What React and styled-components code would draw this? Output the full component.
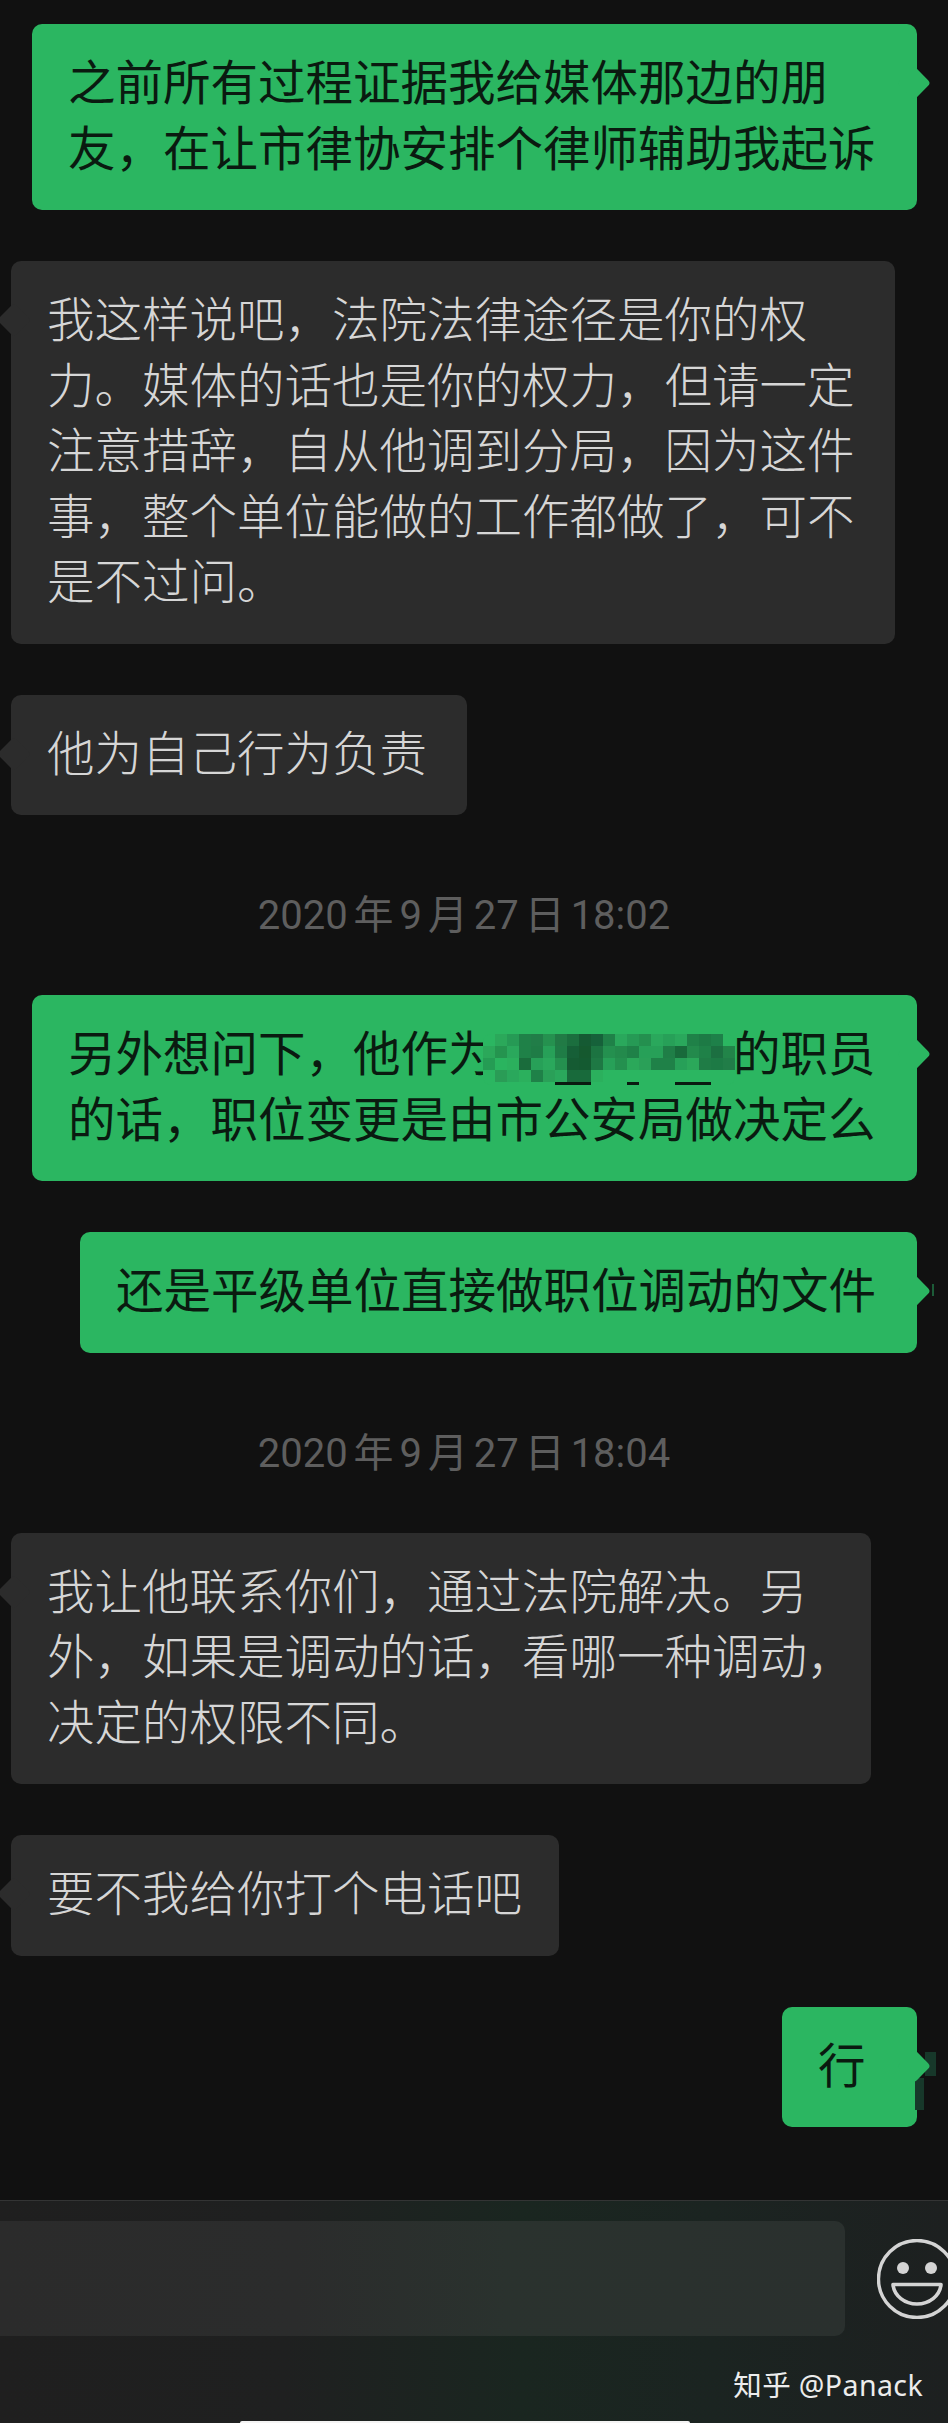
import React from "react";
import styled, { createGlobalStyle } from "styled-components";

const GlobalStyle = createGlobalStyle`
  html, body {
    margin: 0;
    padding: 0;
    background: #111111;
  }

  body {
    font-family: "Noto Sans CJK SC", "Noto Sans", sans-serif;
  }
`;

// 21 x 5 mosaic over the blurred part of the second green message,
// the thin last row is what sticks out of the hidden characters
const MOSAIC = [
  "2bb661 2ba85a 269a55 1f8148 217d48 25914f 217a45 1b6e3e 155a33 16613a 1f8148 2aa85c 269a55 24904f 2aa85c 27a058 2aa85c 1f8148 1d7a45 1e8049 2bb661",
  "2ba85a 25944f 2aa85c 1f8148 1f7c46 27a058 1f7c46 165f37 15592f 1c7341 24904f 238a4c 1f8148 27a058 27a058 1f7e47 186a3b 238a4c 1f8148 1c6f41 228449",
  "259c54 2ab45f 2bb05d 1a6c3c 27a058 2aa85c 24904f 155b33 145a31 1e7844 27a058 24904f 2ba85a 2aa058 1f8148 1f8148 27a058 2ba85a 1f7c46 1d7a45 217d48",
  "2bb661 2a9c56 2aa85c 2bb05d 1f8148 2aa058 2aa85c 186a3b 186a3b 2bb05d 2bb661 2bb661 2bb661 2bb661 2bb661 2bb661 2bb661 2bb661 2bb661 2bb661 2bb661",
  "2bb661 2bb661 2bb661 2bb661 2bb661 2bb661 0a1a10 0a1a10 0a1a10 2bb661 2bb661 2bb661 0a1a10 2bb661 2bb661 2bb661 0a1a10 0a1a10 0a1a10 2bb661 2bb661",
];

const THREADS = [
  { kind: "out", width: 885, lines: ["之前所有过程证据我给媒体那边的朋", "友，在让市律协安排个律师辅助我起诉"] },
  {
    kind: "in",
    width: 884,
    lines: [
      "我这样说吧，法院法律途径是你的权",
      "力。媒体的话也是你的权力，但请一定",
      "注意措辞，自从他调到分局，因为这件",
      "事，整个单位能做的工作都做了，可不",
      "是不过问。",
    ],
  },
  { kind: "in", width: 456, lines: ["他为自己行为负责"] },
  { kind: "time", text: "2020 年 9 月 27 日 18:02" },
  { kind: "redacted", width: 885 },
  { kind: "out", width: 837, lines: ["还是平级单位直接做职位调动的文件"], mark: "thin" },
  { kind: "time", text: "2020 年 9 月 27 日 18:04" },
  {
    kind: "in",
    width: 860,
    lines: ["我让他联系你们，通过法院解决。另", "外，如果是调动的话，看哪一种调动，", "决定的权限不同。"],
  },
  { kind: "in", width: 548, lines: ["要不我给你打个电话吧"] },
  { kind: "out", width: 135, lines: ["行"], mark: "smudge" },
];

const Mosaic = () => (
  <MosaicGrid aria-hidden="true">
    {MOSAIC.flatMap((row, r) =>
      row.split(" ").map((hex, c) => (
        <span key={`${r}-${c}`} style={{ background: `#${hex}` }} />
      ))
    )}
  </MosaicGrid>
);

const Message = ({ item }) => {
  const out = item.kind !== "in";
  return (
    <Bubble $out={out} $width={item.width}>
      {item.kind === "redacted" ? (
        <>
          <Line>
            另外想问下，他作为
            <Redacted>
              <Mosaic />
            </Redacted>
            的职员
          </Line>
          <Line>的话，职位变更是由市公安局做决定么</Line>
        </>
      ) : (
        item.lines.map((line) => <Line key={line}>{line}</Line>)
      )}
      {item.mark === "thin" && <ThinMark />}
      {item.mark === "smudge" && (
        <Smudge viewBox="0 0 21 58">
          <rect x="10" y="0" width="11" height="24" fill="#17382a" />
          <rect x="0" y="26" width="9" height="32" fill="#17382a" />
        </Smudge>
      )}
    </Bubble>
  );
};

const App = () => (
  <>
    <GlobalStyle />
    <Page>
      <Thread>
        {THREADS.map((item, index) =>
          item.kind === "time" ? (
            <TimeStamp key={index}>{item.text}</TimeStamp>
          ) : (
            <Message key={index} item={item} />
          )
        )}
      </Thread>
      <Composer>
        <ComposerRow>
          <InputField />
          <EmojiIcon viewBox="0 0 80 80">
            <circle cx="40" cy="40" r="38.5" fill="none" stroke="#d4d4d4" strokeWidth="3.4" />
            <circle cx="26" cy="29" r="6" fill="#d4d4d4" />
            <circle cx="54" cy="29" r="6" fill="#d4d4d4" />
            <path
              d="M16 45.5 H64 C63 57 52 65 40 65 C28 65 17 57 16 45.5 Z"
              fill="none"
              stroke="#d4d4d4"
              strokeWidth="3.6"
              strokeLinejoin="round"
            />
          </EmojiIcon>
        </ComposerRow>
        <Watermark>知乎 @Panack</Watermark>
        <HomeIndicator />
      </Composer>
    </Page>
  </>
);

export default App;

const Page = styled.div`
  width: 948px;
  height: 2423px;
  display: flex;
  flex-direction: column;
  overflow: hidden;
  background: #111111;
`;

const Thread = styled.main`
  flex: 1;
  display: flex;
  flex-direction: column;
  gap: 51px;
  padding: 24px 31px 0 11px;
`;

const Bubble = styled.div`
  position: relative;
  box-sizing: border-box;
  width: ${({ $width }) => $width}px;
  padding: 23px 38px 32px 36px;
  align-self: ${({ $out }) => ($out ? "flex-end" : "flex-start")};
  border-radius: 10px;
  background: ${({ $out }) => ($out ? "#2bb661" : "#2c2c2c")};
  color: ${({ $out }) => ($out ? "#0a1a10" : "#d6d6d6")};
  font-size: 47.5px;
  line-height: 65.5px;
  font-weight: ${({ $out }) => ($out ? 400 : 300)};

  &::after {
    content: "";
    position: absolute;
    top: 47px;
    ${({ $out }) => ($out ? "right: -9px;" : "left: -9px;")}
    width: 24px;
    height: 24px;
    border-radius: 4px;
    background: inherit;
    transform: rotate(45deg);
  }
`;

const Line = styled.div`
  white-space: nowrap;
`;

const Redacted = styled.span`
  position: relative;
  display: inline-block;
  width: 5em;
  height: 1em;
`;

const MosaicGrid = styled.span`
  position: absolute;
  left: -13px;
  top: 10px;
  display: grid;
  grid-template-columns: repeat(21, 12px);
  grid-template-rows: repeat(4, 12px) 3px;
  border-radius: 8px;
  overflow: hidden;
  filter: blur(0.6px);
`;

const ThinMark = styled.span`
  position: absolute;
  right: -17px;
  top: 52px;
  width: 2px;
  height: 12px;
  background: #1c5c38;
`;

const Smudge = styled.svg`
  position: absolute;
  right: -19px;
  top: 45px;
  width: 21px;
  height: 58px;
`;

const TimeStamp = styled.div`
  box-sizing: border-box;
  height: 78px;
  padding-top: 26px;
  align-self: center;
  color: #5e5e5e;
  font-family: Roboto, "Noto Sans CJK SC", sans-serif;
  font-size: 40px;
  line-height: 48px;
  word-spacing: -4px;
  white-space: nowrap;
`;

const Composer = styled.footer`
  box-sizing: border-box;
  height: 223px;
  padding-top: 20px;
  display: flex;
  flex-direction: column;
  border-top: 1px solid #333434;
  background: linear-gradient(90deg, #1f1f1f 0%, #1f2020 30%, #1a2620 55%, #1b2421 75%, #1d2020 100%);
`;

const ComposerRow = styled.div`
  display: flex;
  align-items: center;
  gap: 32px;
`;

const InputField = styled.div`
  width: 845px;
  height: 115px;
  flex-shrink: 0;
  border-radius: 0 10px 10px 0;
  background: linear-gradient(90deg, #2b2b2b 0%, #2b2c2c 35%, #2a322e 60%, #2a302e 100%);
`;

const EmojiIcon = styled.svg`
  width: 80px;
  height: 80px;
  flex-shrink: 0;
`;

const Watermark = styled.div`
  align-self: flex-end;
  margin: 30px 25px 0 0;
  color: #ececec;
  font-family: "Noto Sans", "Noto Sans CJK SC", sans-serif;
  font-size: 28.5px;
  line-height: 38px;
  letter-spacing: 0.4px;
  white-space: nowrap;
`;

const HomeIndicator = styled.div`
  align-self: flex-start;
  margin: auto 0 0 240px;
  width: 450px;
  height: 2px;
  border-radius: 2px 2px 0 0;
  background: #f4f4f4;
`;
